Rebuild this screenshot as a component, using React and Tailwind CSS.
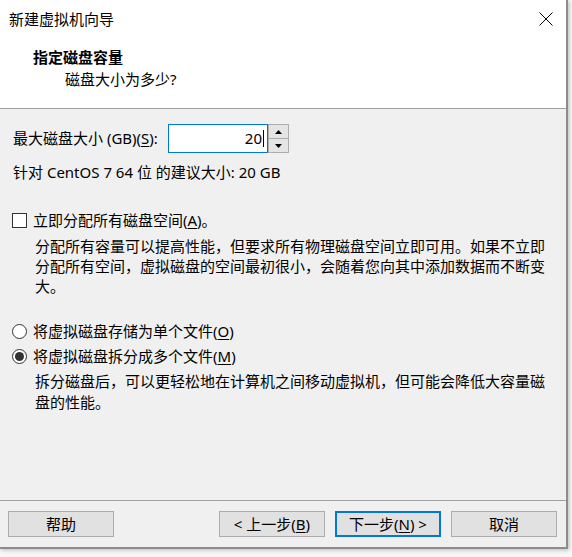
function Mn({ children }) {
  return <span className="underline underline-offset-2">{children}</span>;
}

function Btn({ children, primary }) {
  return (
    <button
      type="button"
      className={
        primary
          ? "flex h-[26px] w-[106px] items-center justify-center border-2 border-[#0078d7] bg-[#e1e1e1] text-[15px] leading-none text-black"
          : "flex h-[26px] w-[106px] items-center justify-center border border-[#adadad] bg-[#e1e1e1] text-[15px] leading-none text-black"
      }
    >
      {children}
    </button>
  );
}

function Radio({ checked }) {
  return (
    <span className="flex h-[15px] w-[15px] shrink-0 items-center justify-center rounded-full border border-[#333] bg-white">
      {checked && <span className="h-[9px] w-[9px] rounded-full bg-[#333]" />}
    </span>
  );
}

export default function App() {
  return (
    <div className="h-[557px] w-[572px] bg-[#f7f7f7] font-['Noto_Sans','Noto_Sans_CJK_SC',sans-serif] text-black">
      <div className="flex h-[549px] w-[568px] flex-col border-r-2 border-b-2 border-[#8c8c8c] bg-[#f0f0f0] shadow-[1px_1px_4px_rgba(0,0,0,0.25)]">
        {/* header */}
        <div className="h-[109px] shrink-0 border-b border-[#a0a0a0] bg-white">
          <div className="flex h-[38px] items-center justify-between pl-[9px] pr-[12px]">
            <span className="text-[15px] leading-none">新建虚拟机向导</span>
            <svg width="14" height="14" viewBox="0 0 14 14" className="mr-[1px]">
              <path d="M0.5 0.5L13.5 13.5M13.5 0.5L0.5 13.5" stroke="#000" strokeWidth="1" fill="none" />
            </svg>
          </div>
          <div className="mt-[8px] pl-[33px] text-[15px] font-bold leading-[22px]">指定磁盘容量</div>
          <div className="pl-[65px] text-[15px] leading-[22px]">磁盘大小为多少?</div>
        </div>

        {/* body */}
        <div className="flex-1 pl-[12px] pt-[15px] text-[15px]">
          <div className="flex h-[29px] items-center">
            <span className="w-[156px] shrink-0 pl-[1px] leading-none">
              最大磁盘大小 (GB)(<Mn>S</Mn>):
            </span>
            <div className="flex h-[29px] w-[100px] items-center justify-end border border-[#0078d7] bg-white pr-[3px]">
              <span className="leading-none">20</span>
              <span className="ml-[1px] h-[17px] w-[1px] bg-black" />
            </div>
            <div className="flex h-[29px] w-[21px] flex-col">
              <div className="flex h-[15px] items-center justify-center border border-[#adadad] bg-[#e5e5e5]">
                <svg width="7" height="4" viewBox="0 0 7 4">
                  <path d="M3.5 0L7 4H0Z" fill="#000" />
                </svg>
              </div>
              <div className="flex h-[14px] items-center justify-center border border-t-0 border-[#adadad] bg-[#e5e5e5]">
                <svg width="7" height="4" viewBox="0 0 7 4">
                  <path d="M0 0H7L3.5 4Z" fill="#000" />
                </svg>
              </div>
            </div>
          </div>

          <div className="mt-[9px] pl-[1px] leading-[20px]">
            针对 CentOS 7 64 位 的建议大小: 20 GB
          </div>

          <div className="mt-[28px] flex h-[20px] items-center gap-[6px]">
            <span className="h-[15px] w-[15px] shrink-0 border border-[#333] bg-white" />
            <span className="leading-none">
              立即分配所有磁盘空间(<Mn>A</Mn>)。
            </span>
          </div>
          <div className="mt-[6px] whitespace-nowrap pl-[23px] leading-[20px]">
            <div>分配所有容量可以提高性能，但要求所有物理磁盘空间立即可用。如果不立即</div>
            <div>分配所有空间，虚拟磁盘的空间最初很小，会随着您向其中添加数据而不断变</div>
            <div>大。</div>
          </div>

          <div className="mt-[25px] flex h-[20px] items-center gap-[6px]">
            <Radio />
            <span className="leading-none">
              将虚拟磁盘存储为单个文件(<Mn>O</Mn>)
            </span>
          </div>
          <div className="mt-[5px] flex h-[20px] items-center gap-[6px]">
            <Radio checked />
            <span className="leading-none">
              将虚拟磁盘拆分成多个文件(<Mn>M</Mn>)
            </span>
          </div>
          <div className="mt-[5px] whitespace-nowrap pl-[23px] leading-[20.5px]">
            <div>拆分磁盘后，可以更轻松地在计算机之间移动虚拟机，但可能会降低大容量磁</div>
            <div>盘的性能。</div>
          </div>
        </div>

        {/* footer */}
        <div className="flex h-[47px] shrink-0 items-start border-t border-[#a0a0a0] pl-[8px] pt-[10px]">
          <Btn>帮助</Btn>
          <div className="ml-[105px] flex gap-[10px]">
            <Btn>
              &lt; 上一步(<Mn>B</Mn>)
            </Btn>
            <Btn primary>
              下一步(<Mn>N</Mn>) &gt;
            </Btn>
            <Btn>取消</Btn>
          </div>
        </div>
      </div>
    </div>
  );
}
